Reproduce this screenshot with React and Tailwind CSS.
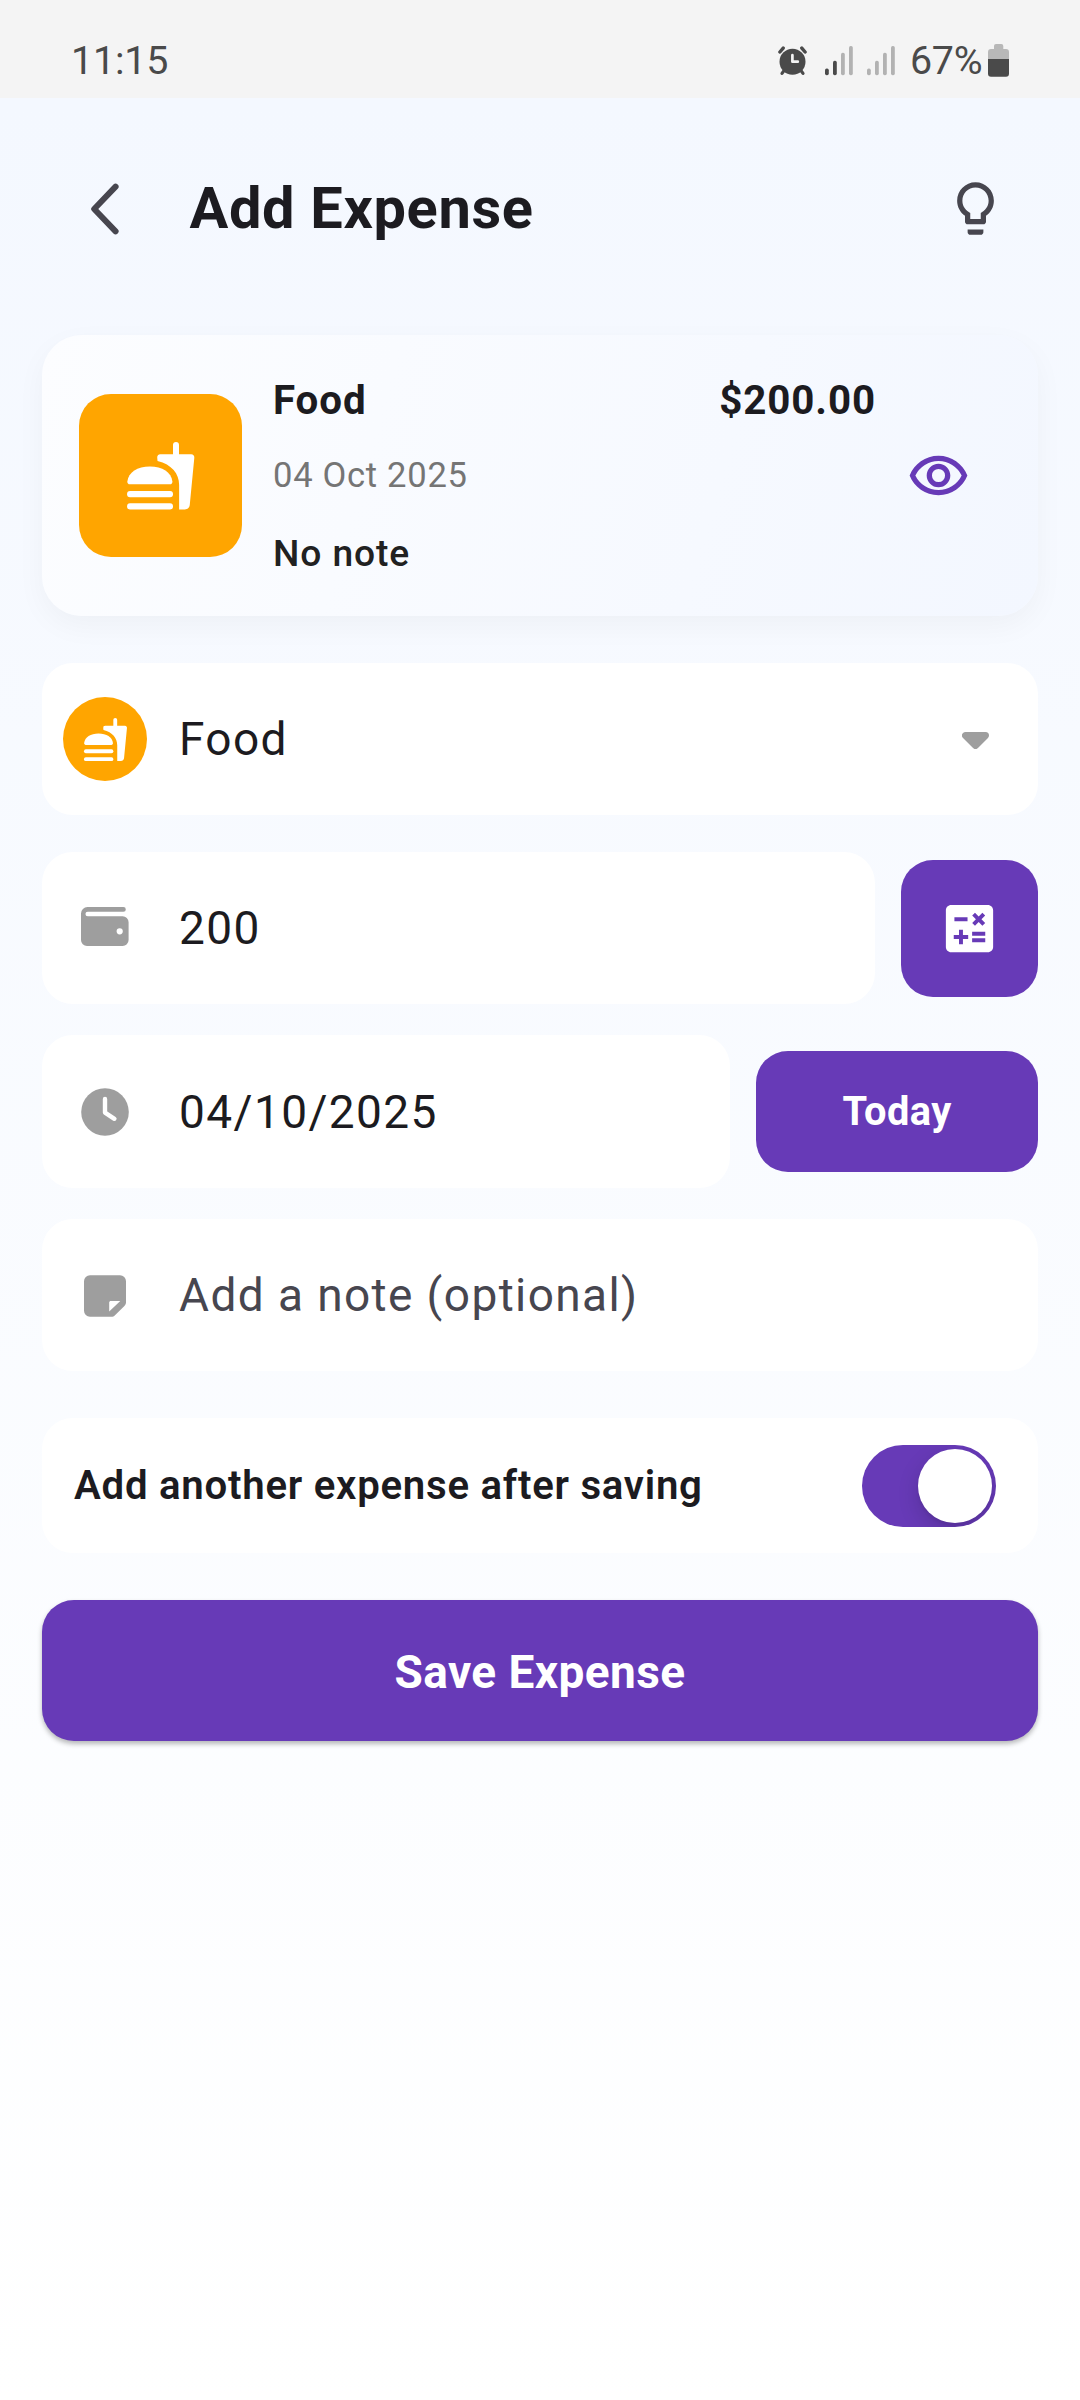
import React from 'react';
import { MdLightbulbOutline, MdOutlineRemoveRedEye, MdCalculate } from 'react-icons/md';

function AlarmIcon() {
  return (
    <svg className="h-[30px] w-[29px]" viewBox="0 0 29 30" fill="none" strokeLinecap="round" strokeLinejoin="round">
      <path d="M1.9 6 5.2 2.1M27.1 6 23.8 2.1" stroke="#4a4a4a" strokeWidth="3.4" />
      <path d="M4 27.4 6 24.6M25 27.4 23 24.6" stroke="#4a4a4a" strokeWidth="3.2" />
      <circle cx="14.5" cy="15.8" r="13" fill="#4a4a4a" />
      <path d="M14.4 9.2v6.5h5.4" stroke="#f4f4f4" strokeWidth="2.7" />
    </svg>
  );
}

function Signal({ filled }) {
  const heights = [6.7, 14.5, 22.5, 29.3];
  return (
    <svg className="h-[30px] w-7" viewBox="0 0 28 30">
      {heights.map((h, i) => (
        <rect key={h} x={i * 8} y={29.3 - h} width="3.8" height={h} rx="1.7" fill={i < filled ? '#4a4a4a' : '#b2b2b2'} />
      ))}
    </svg>
  );
}

function BatteryIcon() {
  return (
    <svg className="h-[33px] w-[21px]" viewBox="0 0 21 33">
      <path d="M6 5V2a2 2 0 0 1 2-2h5.3a2 2 0 0 1 2 2v3H18a3 3 0 0 1 3 3v7H0V8a3 3 0 0 1 3-3Z" fill="#b8b8b8" />
      <path d="M0 15h21v14.7a3 3 0 0 1-3 3H3a3 3 0 0 1-3-3Z" fill="#4a4a4a" />
    </svg>
  );
}

function FastFoodIcon({ className }) {
  return (
    <svg className={className} viewBox="0 0 24 24" fill="currentColor">
      <path d="M1.9 14.8c-.5 0-.85-.4-.8-.95C1.4 10.8 4.4 8.95 8.45 8.95s7.05 1.85 7.35 4.9c.05.55-.3.95-.8.95Z" />
      <rect x="1" y="17" width="15" height="1.98" rx=".95" />
      <rect x="1" y="21" width="15" height="2" rx=".95" />
      <path d="M16 5V1.95a.98.98 0 0 1 1.96 0V5h4c.6 0 1.05.5 1 1.1l-1.5 15.5c-.1.8-.75 1.4-1.6 1.4H18v-8c0-3.6-2.4-6.7-7.05-7.8l-.1-1.05A1 1 0 0 1 11.85 5Z" />
    </svg>
  );
}

function WalletIcon() {
  return (
    <svg className="-mt-[3px] h-[39px] w-12" viewBox="0 0 48 39" fill="#9e9e9e">
      <path
        fillRule="evenodd"
        d="M6.5 0H42.4a2.4 2.4 0 0 1 0 4.8H6.7a2.25 2.25 0 0 0 0 4.5H41.6a6 6 0 0 1 6 6V33a6 6 0 0 1-6 6H6a6 6 0 0 1-6-6V6.5A6.5 6.5 0 0 1 6.5 0ZM38.7 21.2a3.1 3.1 0 1 0 0 6.2 3.1 3.1 0 0 0 0-6.2Z"
      />
    </svg>
  );
}

function ClockIcon() {
  return (
    <svg className="mt-px h-12 w-12" viewBox="0 0 48 48" fill="none">
      <circle cx="24" cy="24" r="23.8" fill="#9e9e9e" />
      <path d="M24 11v13.6l9.4 6.2" stroke="#fff" strokeWidth="4.4" strokeLinecap="round" strokeLinejoin="round" />
    </svg>
  );
}

function NoteIcon() {
  return (
    <svg className="mt-[2px] h-[42px] w-[42px]" viewBox="0 0 42 42" fill="#9e9e9e">
      <path
        fillRule="evenodd"
        d="M6 .3H36a6 6 0 0 1 6 6V27.3c0 1.5-.5 2.6-1.6 3.7L31 40.2c-1 1-2.2 1.5-3.7 1.5H6a6 6 0 0 1-6-6V6.3a6 6 0 0 1 6-6ZM26.8 25.9c-.9 0-1.6.7-1.6 1.6v9L36.3 25.9Z"
      />
    </svg>
  );
}

function Field({ className = '', icon, children, muted }) {
  return (
    <div className={`flex items-center rounded-[31px] bg-white ${className}`}>
      <div className="ml-[21px] flex w-[84px] shrink-0 justify-center">{icon}</div>
      <span className={`ml-8 grow whitespace-nowrap text-[46px] tracking-[1.4px] ${muted ? 'text-[#47464f]' : 'text-[#1c1b20]'}`}>
        {children}
      </span>
    </div>
  );
}

export default function App() {
  return (
    <div className="flex h-[2400px] w-[1080px] flex-col bg-white font-[Roboto,sans-serif] leading-none text-[#1c1b20]">
      <div className="flex h-[98px] shrink-0 items-center bg-[#f4f4f4] pt-[23px] text-[39.4px] text-[#4a4a4a]">
        <span className="ml-[71px] grow tracking-[-0.2px]">11:15</span>
        <AlarmIcon />
        <div className="ml-[18px]"><Signal filled={2} /></div>
        <div className="ml-[14px]"><Signal filled={0} /></div>
        <span className="ml-[15px] w-[75px] tracking-[-0.3px]">67%</span>
        <div className="mr-[71px] ml-[3px]"><BatteryIcon /></div>
      </div>

      <div className="flex grow flex-col bg-linear-to-b from-[#f4f8ff] to-white px-[42px]">
        <header className="flex h-[221px] shrink-0 items-center">
          <svg className="ml-[47px] h-[52px] w-8" viewBox="0 0 32 52" fill="none">
            <path d="M26.6 3.7 5.2 26 26.6 48.3" stroke="#47464f" strokeWidth="6" strokeLinecap="round" strokeLinejoin="round" />
          </svg>
          <h1 className="ml-[68.5px] grow text-[57.75px] font-bold tracking-[0.65px]">Add Expense</h1>
          <MdLightbulbOutline className="mr-[31.5px] size-[63px] text-[#47464f]" />
        </header>

        <section className="mt-4 flex h-[281px] shrink-0 rounded-[40px] bg-linear-[106deg] from-[#fcfdff] to-[#f3f7ff] shadow-[0_10px_30px_rgba(0,0,0,0.04)]">
          <div className="ml-[37px] flex size-[163px] shrink-0 items-center justify-center self-center rounded-[32px] bg-[#ffa500] text-white">
            <FastFoodIcon className="size-[73.5px]" />
          </div>
          <div className="ml-[31px] flex grow flex-col pt-[36px]">
            <div className="flex justify-between text-[40.3px] leading-[60px] font-bold tracking-[0.9px]">
              <span>Food</span>
              <span>$200.00</span>
            </div>
            <span className="mt-[19px] text-[34.6px] leading-[50px] tracking-[0.7px] text-[#757575]">04 Oct 2025</span>
            <span className="mt-[28px] text-[37.2px] leading-[50px] font-medium tracking-[0.9px] text-[#212121]">No note</span>
          </div>
          <div className="flex w-[162px] shrink-0 items-center pl-[31px]">
            <MdOutlineRemoveRedEye className="size-[63px] text-[#673ab7]" />
          </div>
        </section>

        <div className="mt-[47px] flex h-[152px] shrink-0 items-center rounded-[31px] bg-white">
          <div className="ml-[21px] flex size-[84px] items-center justify-center rounded-full bg-[#ffa500] text-white">
            <FastFoodIcon className="size-[47px]" />
          </div>
          <span className="ml-8 grow text-[46px] tracking-[1.4px]">Food</span>
          <svg className="mt-[3px] mr-[49.5px] h-[17px] w-[27px]" viewBox="0 0 27 17">
            <path d="M3.5 3.5h20l-10 10Z" fill="#9e9e9e" stroke="#9e9e9e" strokeWidth="7" strokeLinejoin="round" />
          </svg>
        </div>

        <div className="mt-[37px] flex h-[152px] shrink-0 items-center gap-[26px]">
          <Field className="h-full grow" icon={<WalletIcon />}>200</Field>
          <button className="flex size-[137px] items-center justify-center rounded-[32px] bg-[#673ab7]">
            <MdCalculate className="size-[63px] text-white" />
          </button>
        </div>

        <div className="mt-[31px] flex h-[153px] shrink-0 items-center gap-[26px]">
          <Field className="h-full grow" icon={<ClockIcon />}>04/10/2025</Field>
          <button className="h-[121px] w-[282px] rounded-[32px] bg-[#673ab7] text-[39.8px] font-bold tracking-[0.4px] text-white">
            Today
          </button>
        </div>

        <Field className="mt-[31px] h-[152px] shrink-0" icon={<NoteIcon />} muted>Add a note (optional)</Field>

        <div className="mt-[47px] flex h-[135px] shrink-0 items-center rounded-[31px] bg-white pr-[42px] pl-8">
          <span className="grow pt-[2px] text-[40.2px] font-semibold tracking-[0.74px]">Add another expense after saving</span>
          <div className="flex h-[82px] w-[134px] items-center justify-end overflow-hidden rounded-full bg-[#673ab7] pr-1">
            <div className="size-[74px] rounded-full bg-white shadow-[0_8px_21px_rgba(0,0,0,0.15),0_3px_3px_rgba(0,0,0,0.06)]" />
          </div>
        </div>

        <button className="mt-[47px] h-[141px] shrink-0 rounded-[32px] bg-[#673ab7] pt-[2px] text-[46px] font-bold tracking-[0.4px] text-white shadow-[0_3px_5px_rgba(0,0,0,0.28)]">
          Save Expense
        </button>
      </div>
    </div>
  );
}
